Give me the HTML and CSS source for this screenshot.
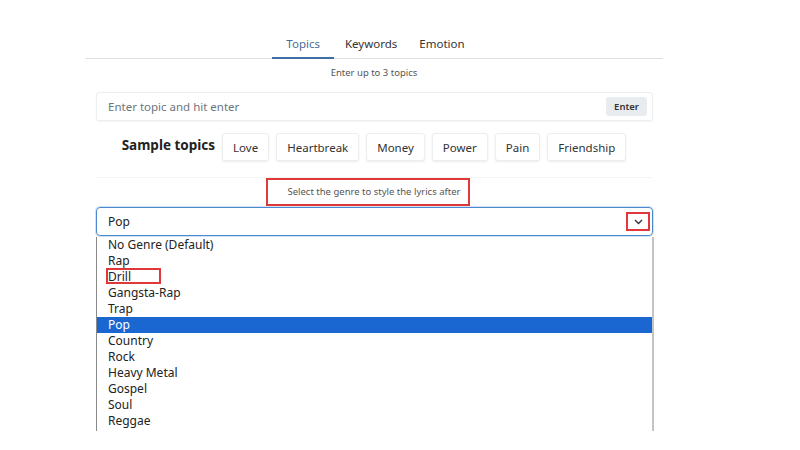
FILE: index.html
```html
<!DOCTYPE html>
<html lang="en">
<head>
    <meta charset="UTF-8">
    <meta name="viewport" content="width=device-width, initial-scale=1.0">
    <title>Lyrics generator</title>
    <link rel="stylesheet" href="styles.css">
</head>
<body>
    <div class="container">
        <div class="tabs">
            <span class="tab active">Topics</span>
            <span class="tab">Keywords</span>
            <span class="tab">Emotion</span>
        </div>
        <p class="hint">Enter up to 3 topics</p>

        <div class="topic-input">
            <span class="placeholder">Enter topic and hit enter</span>
            <button class="enter">Enter</button>
        </div>

        <div class="samples">
            <h3>Sample topics</h3>
            <button class="chip">Love</button>
            <button class="chip">Heartbreak</button>
            <button class="chip">Money</button>
            <button class="chip">Power</button>
            <button class="chip">Pain</button>
            <button class="chip">Friendship</button>
        </div>

        <div class="genre-label">
            <span class="marked">Select the genre to style the lyrics after</span>
        </div>

        <div class="select">
            <span>Pop</span>
            <span class="arrow">
                <svg width="9" height="6" viewBox="0 0 9 6"><path d="M1 1l3.5 3.5L8 1" fill="none" stroke="#333" stroke-width="1.4"/></svg>
            </span>
        </div>
        <ul class="options">
            <li>No Genre (Default)</li>
            <li>Rap</li>
            <li class="boxed">Drill</li>
            <li>Gangsta-Rap</li>
            <li>Trap</li>
            <li class="selected">Pop</li>
            <li>Country</li>
            <li>Rock</li>
            <li>Heavy Metal</li>
            <li>Gospel</li>
            <li>Soul</li>
            <li>Reggae</li>
        </ul>
    </div>
</body>
</html>
```

FILE: styles.css
```css
body {
    margin: 0;
    font-family: "Noto Sans", "Open Sans", sans-serif;
    color: #333;
    background: #fff;
}
.container {
    width: 578px;
    margin: 0 0 0 85px;
    padding-top: 30px;
}
.tabs {
    display: flex;
    justify-content: center;
    border-bottom: 1px solid #dcdfe3;
    height: 28px;
}
.tab {
    padding: 0 11px;
    font-size: 11.5px;
    line-height: 28px;
    color: #333;
}
.tab.active {
    color: #4a6c9a;
    border-bottom: 2px solid #3d6ea8;
    margin-bottom: -1px;
    padding: 0 14px;
}
.hint {
    margin: 0;
    padding: 6px 0 0;
    text-align: center;
    font-size: 9.5px;
    line-height: 16px;
    color: #555;
}
.topic-input {
    display: flex;
    align-items: center;
    justify-content: space-between;
    margin: 11px 10px 0 11px;
    height: 29px;
    border: 1px solid #eceef0;
    border-radius: 3px;
    box-shadow: 0 1px 2px rgba(0, 0, 0, .04);
    padding: 0 5px 0 11px;
    box-sizing: border-box;
}
.placeholder {
    font-size: 11.5px;
    color: #6c757d;
}
.enter {
    font-family: inherit;
    font-size: 9.5px;
    font-weight: 600;
    color: #333;
    background: #e9ecef;
    border: 0;
    border-radius: 3px;
    height: 19px;
    padding: 0 8px;
}
.samples {
    display: flex;
    align-items: center;
    justify-content: center;
    gap: 7px;
    margin: 12px 11px 0;
    padding-bottom: 16px;
    border-bottom: 1px solid #f2f3f4;
}
.samples h3 {
    margin: 0 0 4px 0;
    font-size: 13.5px;
    font-weight: 700;
    color: #222;
}
.chip {
    font-family: inherit;
    font-size: 11.5px;
    color: #333;
    background: #fff;
    border: 1px solid #eceef0;
    border-radius: 3px;
    box-shadow: 0 1px 2px rgba(0, 0, 0, .08);
    height: 28px;
    padding: 0 10px;
}
.genre-label {
    display: flex;
    justify-content: center;
}
.marked {
    font-size: 9.5px;
    line-height: 24px;
    color: #555;
    border: 2px solid #e0383a;
    padding: 0 7px 0 19px;
    margin-right: 12px;
}
.select {
    display: flex;
    align-items: center;
    justify-content: space-between;
    margin: 1px 10px 0 11px;
    height: 29px;
    border: 1px solid #4c8ad0;
    border-radius: 4px;
    box-shadow: 0 0 0 1px rgba(76, 138, 208, .25);
    padding: 0 2px 0 11px;
    box-sizing: border-box;
    font-size: 12px;
    color: #222;
}
.arrow {
    display: flex;
    align-items: center;
    justify-content: center;
    width: 20px;
    height: 15px;
    border: 2px solid #e0383a;
}
.options {
    list-style: none;
    margin: 1px 9px 0 11px;
    padding: 0;
    border-left: 1px solid #8a8a8a;
    border-right: 2px solid #c4c4c4;
    height: 194px;
    overflow: hidden;
    font-size: 12px;
    color: #222;
}
.options li {
    height: 16px;
    line-height: 16px;
    padding-left: 11px;
    position: relative;
}
.options li.selected {
    background: #1a67d2;
    color: #fff;
}
.options li.boxed::after {
    content: '';
    position: absolute;
    left: 9px;
    top: -1px;
    width: 51px;
    height: 12px;
    border: 2px solid #e0383a;
}
```
